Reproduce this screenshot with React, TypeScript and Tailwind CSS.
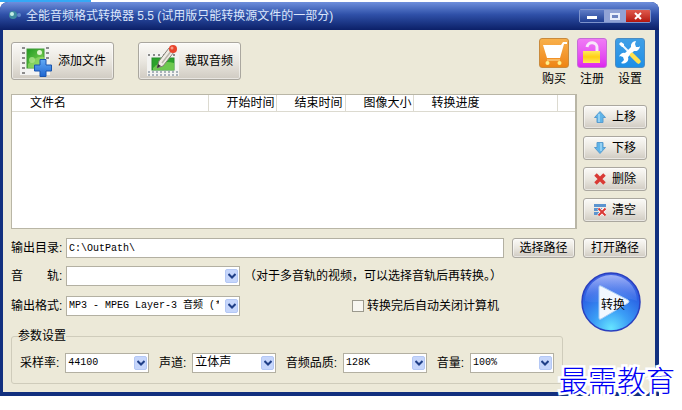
import { useState } from "react";
import type { ReactNode } from "react";

//shared look of the raised grey buttons
const raised =
  "rounded-[3px] border border-[#aaa79f] bg-linear-to-b from-[#fbfaf7] via-[#eae7e0] to-[#d0cbc2] shadow-[inset_0_0_0_1px_#ffffff80] text-black";

//film strip with a plus sign
function AddFileIcon() {
  return (
    <svg className="w-8 h-8" viewBox="0 0 32 32">
      <defs>
        <linearGradient id="pic" x1="0" y1="0" x2="1" y2="1">
          <stop offset="0" stopColor="#1f9a22" />
          <stop offset="1" stopColor="#8fdc5c" />
        </linearGradient>
        <linearGradient id="plus" x1="0" y1="0" x2="0" y2="1">
          <stop offset="0" stopColor="#62aaf6" />
          <stop offset="1" stopColor="#1f66d0" />
        </linearGradient>
      </defs>
      <rect x="0" y="0" width="30" height="30" fill="#f3f3f2" />
      <path d="M3.500 2v27M27.500 2v15" stroke="#8c8c8c" strokeWidth="3" strokeDasharray="2 3" />
      <rect x="7" y="4" width="17" height="19" fill="url(#pic)" stroke="#3f9a35" />
      <circle cx="19.500" cy="7.500" r="2.500" fill="#dff5cf" />
      <circle cx="12" cy="15" r="3" fill="#b8ea98" opacity=".7" />
      <path d="M8 19c5-5 10-8 16-7v6l-8 5H8z" fill="#a8e37c" opacity=".5" />
      <path
        d="M20 14.500h6v5.500h5.500v6H26v5.500h-6V26h-5.500v-6H20z"
        fill="url(#plus)"
        stroke="#1b55ae"
        strokeLinejoin="round"
      />
    </svg>
  );
}

//film strip with a pencil
function CutAudioIcon() {
  return (
    <svg className="w-8 h-8" viewBox="0 0 32 32">
      <path d="M0 8h32v23H0z" fill="#f3f3f1" />
      <path d="M1 10h30" stroke="#8a8a8a" strokeWidth="2" strokeDasharray="2 3" />
      <path d="M1 27h30M1 30h30" stroke="#a9b2bb" strokeWidth="2" strokeDasharray="2 2" />
      <rect x="5" y="13" width="22" height="12" fill="#2ba22b" stroke="#258b2a" />
      <path d="M6 23c6-6 13-7 21-5v7H6z" fill="#8ad95f" opacity=".7" />
      <path d="m10 23 2-7L22 3l5 4-11 14z" fill="#efece4" stroke="#858078" />
      <path d="m15 18 10-13" stroke="#b9b5ab" strokeWidth="1.500" />
      <path d="m10 23 1-4 3 2z" fill="#333" />
      <circle cx="26" cy="4" r="4" fill="#e8452c" />
      <circle cx="25" cy="3" r="1.500" fill="#f79a86" />
    </svg>
  );
}

function CartIcon() {
  return (
    <svg className="w-full h-full" viewBox="0 0 28 28">
      <path d="M3 6h18l2-3h4v2h-3l-4 14H7z" fill="#fff" />
      <path d="M7 21h13" stroke="#ffdf9b" strokeWidth="1" />
      <circle cx="7.500" cy="24" r="2" fill="#fff08a" />
      <circle cx="19.500" cy="24" r="2" fill="#fff08a" />
    </svg>
  );
}

function LockIcon() {
  return (
    <svg className="w-full h-full" viewBox="0 0 28 28">
      <defs>
        <linearGradient id="lock" x1="0" y1="0" x2="0" y2="1">
          <stop offset="0" stopColor="#ffe95c" />
          <stop offset=".5" stopColor="#ffcf14" />
          <stop offset="1" stopColor="#ffe95c" />
        </linearGradient>
      </defs>
      <path d="M19 13V9.500a5 5 0 0 0-10-1.500" fill="none" stroke="#f8e6fa" strokeWidth="3" />
      <rect x="5" y="12" width="17" height="12" fill="url(#lock)" />
    </svg>
  );
}

function ToolsIcon() {
  return (
    <svg className="w-full h-full" viewBox="0 0 28 28">
      <path d="m5 5 10 10" stroke="#eef8ff" strokeWidth="2" />
      <path d="m3 5 2-2 3 2v3l-2 0z" fill="#fff" />
      <path
        d="M24 7a5 5 0 0 1-6 5l-6 6a5 5 0 0 1-7 6l3-3-1-3-3-1-1 1a5 5 0 0 1 6-4l6-6a5 5 0 0 1 5-6l-1 3 1 3 3 0z"
        fill="#fff"
      />
      <path d="m16 16 6.500 6.500" stroke="#ffe14d" strokeWidth="4.500" strokeLinecap="round" />
    </svg>
  );
}

function ArrowIcon({ down = false }: { down?: boolean }) {
  return (
    <svg className={down ? "w-3 h-3 rotate-180" : "w-3 h-3"} viewBox="0 0 12 12">
      <path d="M6 .5 11.500 6.500H9v5H3v-5H.5z" fill="#5fb4e8" stroke="#5a9ccf" />
      <path d="M5 3v8" stroke="#93d0f3" strokeWidth="2" />
    </svg>
  );
}

function CrossIcon() {
  return (
    <svg className="w-3 h-3" viewBox="0 0 12 12">
      <path d="m1.500 1.500 9 9m0-9-9 9" stroke="#d93a35" strokeWidth="3.500" />
    </svg>
  );
}

function ClearIcon() {
  return (
    <svg className="w-3 h-3" viewBox="0 0 12 12">
      <path d="M0 1.500h12M0 5.500h8M0 9.500h5" stroke="#5b94cf" strokeWidth="3" />
      <path d="m4.500 4.500 7 7m0-7-7 7" stroke="#fff" strokeWidth="3.500" />
      <path d="m4.500 4.500 7 7m0-7-7 7" stroke="#d93a35" strokeWidth="2" />
    </svg>
  );
}

//drop-down with the blue XP arrow on its right
function Combo({
  id,
  width,
  options,
  font = "text-[10px]",
}: {
  id: string;
  width: string;
  options: string[];
  font?: string;
}) {
  return (
    <div className={`relative shrink-0 ${width}`}>
      <select
        id={id}
        className={`block w-full h-5 appearance-none border border-[#b3b0a2] bg-white pl-0.5 pr-5 font-['Liberation_Mono','Noto_Sans_CJK_SC',monospace] text-black ${font}`}
      >
        {options.map((o) => (
          <option key={o}>{o}</option>
        ))}
      </select>
      <span className="pointer-events-none absolute right-0.5 top-[3px] flex h-3.5 w-[13px] items-center justify-center rounded-[2px] border border-[#b4c8f5] bg-[#c6d6fb]">
        <svg className="w-2 h-2" viewBox="0 0 8 8">
          <path d="m.5 2 3.500 3.500L7.500 2" fill="none" stroke="#1f3f87" strokeWidth="2" />
        </svg>
      </span>
    </div>
  );
}

function SideButton({ icon, children }: { icon: ReactNode; children: ReactNode }) {
  return (
    <button className={`flex h-6 w-full items-center justify-center gap-1.5 ${raised}`}>
      {icon}
      {children}
    </button>
  );
}

function TopButton({ color, icon, label }: { color: string; icon: ReactNode; label: string }) {
  return (
    <button className="flex w-[30px] flex-col items-center gap-[3px]">
      <span className={`h-[30px] w-[30px] rounded-[3px] border ${color}`}>{icon}</span>
      <span className="leading-4">{label}</span>
    </button>
  );
}

//bottom group
const params = [
  { id: "rate", label: "采样率:", options: ["44100", "48000"], font: "text-[10px]" },
  { id: "channel", label: "声道:", options: ["立体声", "单声道"], font: "text-xs" },
  { id: "quality", label: "音频品质:", options: ["128K", "192K"], font: "text-[10px]" },
  { id: "volume", label: "音量:", options: ["100%", "200%"], font: "text-[10px]" },
];

const columns = [
  { name: "文件名", width: "" },
  { name: "开始时间", width: "w-[68px]" },
  { name: "结束时间", width: "w-[69px]" },
  { name: "图像大小", width: "w-[68px]" },
  { name: "转换进度", width: "w-36" },
];

export default function App() {
  const [path, setPath] = useState("C:\\OutPath\\");
  const [shutdown, setShutdown] = useState(false);

  return (
    <main className="relative min-h-screen bg-white pr-[23px] pb-3.5 font-['Liberation_Sans','Noto_Sans_CJK_SC',sans-serif] text-xs text-black">
      <div className="h-0.5 w-[91px] bg-[#35a8f5]" />

      {/* Window */}
      <div className="rounded-t-lg bg-[#12307f]">
        {/* Title bar */}
        <header className="flex h-7 items-center rounded-t-lg bg-linear-to-b from-[#6f8fdc] via-[#2f50a8] via-45% to-[#0c2068] px-2">
          <svg className="mr-1 w-3.5 h-3.5" viewBox="0 0 14 14">
            <circle cx="5" cy="6" r="4" fill="#3e8ca0" />
            <circle cx="4" cy="5" r="2" fill="#c4f0e4" />
            <circle cx="11" cy="6" r="2" fill="#5f86c9" />
          </svg>
          <h1 className="flex-1 truncate leading-5 text-[#dbe6fb]">
            全能音频格式转换器 5.5 (试用版只能转换源文件的一部分)
          </h1>
          <div className="flex h-3.5 overflow-hidden rounded-[2px] border border-[#7d93cc]">
            <button aria-label="最小化" className="flex w-6 items-end justify-center bg-linear-to-b from-[#5f7cc6] to-[#213f94] pb-[3px]">
              <span className="h-[3px] w-2.5 bg-white" />
            </button>
            <button aria-label="最大化" className="flex w-[22px] items-center justify-center bg-[#91a3d6]">
              <span className="h-[7px] w-2.5 border-2 border-[#e9eefb] bg-[#6e84c0]" />
            </button>
            <button aria-label="关闭" className="flex w-6 items-center justify-center bg-linear-to-b from-[#e0594c] to-[#b3120c]">
              <svg className="w-2 h-2" viewBox="0 0 8 8">
                <path d="m1 1 6 6m0-6L1 7" stroke="#fff" strokeWidth="2" />
              </svg>
            </button>
          </div>
        </header>

        <div className="mx-[3px] mr-1 bg-[#ece9d8] px-2 pt-2 pb-2">
          {/* Toolbar */}
          <div className="flex items-start justify-between">
            <div className="mt-1 flex gap-6">
              <button className={`flex h-[38px] w-[103px] items-center gap-1.5 pl-2 ${raised}`}>
                <AddFileIcon />
                添加文件
              </button>
              <button className={`flex h-[38px] w-[103px] items-center gap-1.5 pl-2 ${raised}`}>
                <CutAudioIcon />
                截取音频
              </button>
            </div>
            <div className="flex gap-2 pr-0.5">
              <TopButton color="border-[#c98a3c] bg-linear-to-b from-[#f8b04a] to-[#ee8410]" icon={<CartIcon />} label="购买" />
              <TopButton color="border-[#c56cd6] bg-linear-to-b from-[#f07af5] to-[#dd24ee]" icon={<LockIcon />} label="注册" />
              <TopButton color="border-[#4c8cc2] bg-linear-to-b from-[#3f9fe6] to-[#1d8fe6]" icon={<ToolsIcon />} label="设置" />
            </div>
          </div>

          {/* File list and its buttons */}
          <div className="mt-[7px] flex gap-1.5">
            <div className="h-[135px] min-w-0 flex-1 border border-r-2 border-[#b9b6a6] bg-white">
              <table className="w-full table-fixed border-collapse">
                <thead>
                  <tr className="h-4 border-b border-[#dcdad0]">
                    {columns.map((c) => (
                      <th
                        key={c.name}
                        className={`whitespace-nowrap border-r border-[#dcdad0] p-0 pl-[18px] text-left font-normal leading-4 ${c.width}`}
                      >
                        {c.name}
                      </th>
                    ))}
                    <th className="w-[18px] p-0" />
                  </tr>
                </thead>
                <tbody />
              </table>
            </div>
            <div className="flex w-16 flex-col gap-[7px] pt-[11px]">
              <SideButton icon={<ArrowIcon />}>上移</SideButton>
              <SideButton icon={<ArrowIcon down />}>下移</SideButton>
              <SideButton icon={<CrossIcon />}>删除</SideButton>
              <SideButton icon={<ClearIcon />}>清空</SideButton>
            </div>
          </div>

          {/* Output folder */}
          <div className="mt-[9px] flex items-center">
            <label htmlFor="path" className="w-[55px]">输出目录:</label>
            <input
              id="path"
              value={path}
              onChange={(e) => setPath(e.target.value)}
              className="mr-2 h-5 min-w-0 flex-1 border border-[#b3b0a2] bg-white px-0.5 font-['Liberation_Mono',monospace] text-[10px]"
            />
            <button className={`mr-2 h-5 w-[63px] leading-4 ${raised}`}>选择路径</button>
            <button className={`h-5 w-16 leading-4 ${raised}`}>打开路径</button>
          </div>

          <div className="mt-2 flex gap-3">
            <div className="min-w-0 flex-1">
              <div className="flex items-center">
                <label htmlFor="track" className="w-[55px]">音　　轨:</label>
                <Combo id="track" width="w-[174px]" options={[""]} />
                <span className="ml-1 whitespace-nowrap">（对于多音轨的视频，可以选择音轨后再转换。）</span>
              </div>

              <div className="mt-2.5 flex items-center">
                <label htmlFor="format" className="w-[55px]">输出格式:</label>
                <Combo id="format" width="w-[174px]" options={["MP3 - MPEG Layer-3 音频 (*.mp3)"]} />
                <label className="ml-auto mr-16 flex items-center gap-[3px] whitespace-nowrap">
                  <input
                    type="checkbox"
                    checked={shutdown}
                    onChange={(e) => setShutdown(e.target.checked)}
                    className="h-3 w-3 appearance-none border border-[#9b998d] bg-[#f7f6f0] checked:bg-[#21a121]"
                  />
                  转换完后自动关闭计算机
                </label>
              </div>

              {/* Parameters */}
              <fieldset className="mt-3 rounded-[3px] border border-[#cfccbb] px-2 pt-[9px] pb-2.5">
                <legend className="-ml-0.5 leading-4">参数设置</legend>
                <div className="flex items-center justify-between">
                  {params.map((p) => (
                    <div key={p.id} className="flex items-center">
                      <label htmlFor={p.id} className="mr-1.5 whitespace-nowrap">{p.label}</label>
                      <Combo id={p.id} width="w-[84px]" options={p.options} font={p.font} />
                    </div>
                  ))}
                </div>
              </fieldset>
            </div>

            {/* Convert */}
            <div className="flex w-[72px] justify-center pt-1.5">
              <button className="relative h-[60px] w-[60px] rounded-full">
                <svg className="h-full w-full" viewBox="0 0 60 60">
                  <defs>
                    <radialGradient id="ball" cx=".5" cy=".95" r=".9">
                      <stop offset="0" stopColor="#66e4ff" />
                      <stop offset=".35" stopColor="#3b9ef6" />
                      <stop offset=".75" stopColor="#2a62e4" />
                      <stop offset="1" stopColor="#3d5fe0" />
                    </radialGradient>
                    <linearGradient id="gloss" x1="0" y1="0" x2="0" y2="1">
                      <stop offset="0" stopColor="#c3d0ff" stopOpacity=".75" />
                      <stop offset="1" stopColor="#6f94f5" stopOpacity=".15" />
                    </linearGradient>
                  </defs>
                  <circle cx="30" cy="30" r="29" fill="url(#ball)" stroke="#2a3fbe" strokeWidth="1.500" />
                  <path d="M4 29a26 26 0 0 1 52 0C40 22 20 34 4 29z" fill="url(#gloss)" />
                  <path
                    d="M18 15q0-2 2-1l27 14q2 2 0 3L20 47q-2 1-2-1z"
                    fill="#f2f8ff"
                    stroke="#a9cdf5"
                  />
                </svg>
                <span className="absolute inset-0 flex items-center justify-center pt-1.5 pl-1">转换</span>
              </button>
            </div>
          </div>
        </div>
        <div className="h-1" />
      </div>

      <p className="absolute right-[7px] bottom-4 font-['Noto_Sans_CJK_SC',sans-serif] text-[29px] leading-[30px] font-light text-[#0000f5] [-webkit-text-stroke:5px_white] [paint-order:stroke_fill]">
        最需教育
      </p>
    </main>
  );
}
